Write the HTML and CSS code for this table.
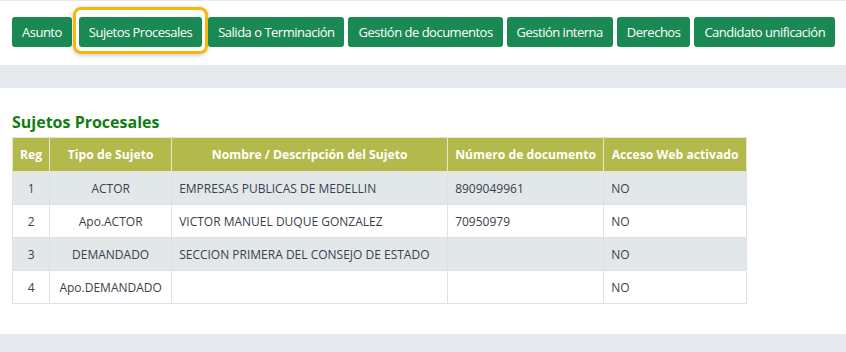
FILE: index.html
```html
<!DOCTYPE html>
<html lang="es">
<head>
<meta charset="utf-8">
<link rel="stylesheet" href="styles.css">
</head>
<body>
<div class="topline"></div>
<nav class="tabs">
  <button class="tab">Asunto</button>
  <button class="tab active">Sujetos Procesales</button>
  <button class="tab">Salida o Terminación</button>
  <button class="tab">Gestión de documentos</button>
  <button class="tab">Gestión interna</button>
  <button class="tab">Derechos</button>
  <button class="tab">Candidato unificación</button>
</nav>
<div class="band"></div>
<section class="panel">
  <h2 class="title">Sujetos Procesales</h2>
  <table class="grid">
    <thead>
      <tr>
        <th class="c-reg">Reg</th>
        <th class="c-tipo">Tipo de Sujeto</th>
        <th class="c-nom">Nombre / Descripción del Sujeto</th>
        <th class="c-num">Número de documento</th>
        <th class="c-acc">Acceso Web activado</th>
      </tr>
    </thead>
    <tbody>
      <tr><td class="ctr">1</td><td class="ctr">ACTOR</td><td>EMPRESAS PUBLICAS DE MEDELLIN</td><td>8909049961</td><td>NO</td></tr>
      <tr><td class="ctr">2</td><td class="ctr">Apo.ACTOR</td><td>VICTOR MANUEL DUQUE GONZALEZ</td><td>70950979</td><td>NO</td></tr>
      <tr><td class="ctr">3</td><td class="ctr">DEMANDADO</td><td>SECCION PRIMERA DEL CONSEJO DE ESTADO</td><td></td><td>NO</td></tr>
      <tr><td class="ctr">4</td><td class="ctr">Apo.DEMANDADO</td><td></td><td></td><td>NO</td></tr>
    </tbody>
  </table>
</section>
<div class="band bottom"></div>
</body>
</html>
```
FILE: styles.css
```css
* { box-sizing: border-box; }
html, body { margin: 0; padding: 0; background: #fff; }
body {
  font-family: "Open Sans", "Noto Sans", "DejaVu Sans", sans-serif;
  color: #3a3f4a;
  width: 846px;
  height: 352px;
  overflow: hidden;
}
.topline { height: 1px; background: #e6e9ee; }
.tabs {
  display: flex;
  gap: 4px;
  padding: 16px 12px 0 12px;
  height: 64px;
  align-items: flex-start;
}
.tab {
  position: relative;
  font-family: inherit;
  font-size: 13px;
  letter-spacing: -0.5px;
  color: #fff;
  background: #1b8954;
  border: none;
  border-radius: 3px;
  height: 30px;
  padding: 0 10px;
  line-height: 30px;
  white-space: nowrap;
  cursor: pointer;
}
.tab.active {
  margin: 0 2px 0 3px;
}
.tab.active::before {
  content: "";
  position: absolute;
  top: -10px;
  bottom: -7px;
  left: -6px;
  right: -6px;
  border: 3px solid #f4b70a;
  border-radius: 8px;
  box-shadow: 0 1px 4px rgba(0,0,0,0.22);
  pointer-events: none;
}
.band { height: 23px; background: #e6e9ee; }
.panel { padding: 24px 12px 0 12px; height: 246px; }
.title {
  margin: 0 0 5px 0;
  font-size: 16px;
  font-weight: 700;
  color: #0f7d12;
  line-height: 20px;
}
.grid {
  border-collapse: collapse;
  font-size: 12px;
}
.grid th, .grid td {
  border: 1px solid #dde1e5;
  height: 33px;
  padding: 0 7px;
  white-space: nowrap;
}
.grid th {
  height: 34px;
  background: #b3b94b;
  color: #fff;
  font-weight: 700;
  font-size: 12.2px;
  text-align: center;
  border-color: #e4e7d0;
}
.grid tbody tr:nth-child(odd) td { background: #e2e8ea; }
.grid td { text-align: left; }
.grid td.ctr { text-align: center; }
.c-reg { width: 37px; }
.c-tipo { width: 122px; }
.c-nom { width: 276px; }
.c-num { width: 156px; }
.c-acc { width: 143px; }
.bottom { height: 18px; }
```
